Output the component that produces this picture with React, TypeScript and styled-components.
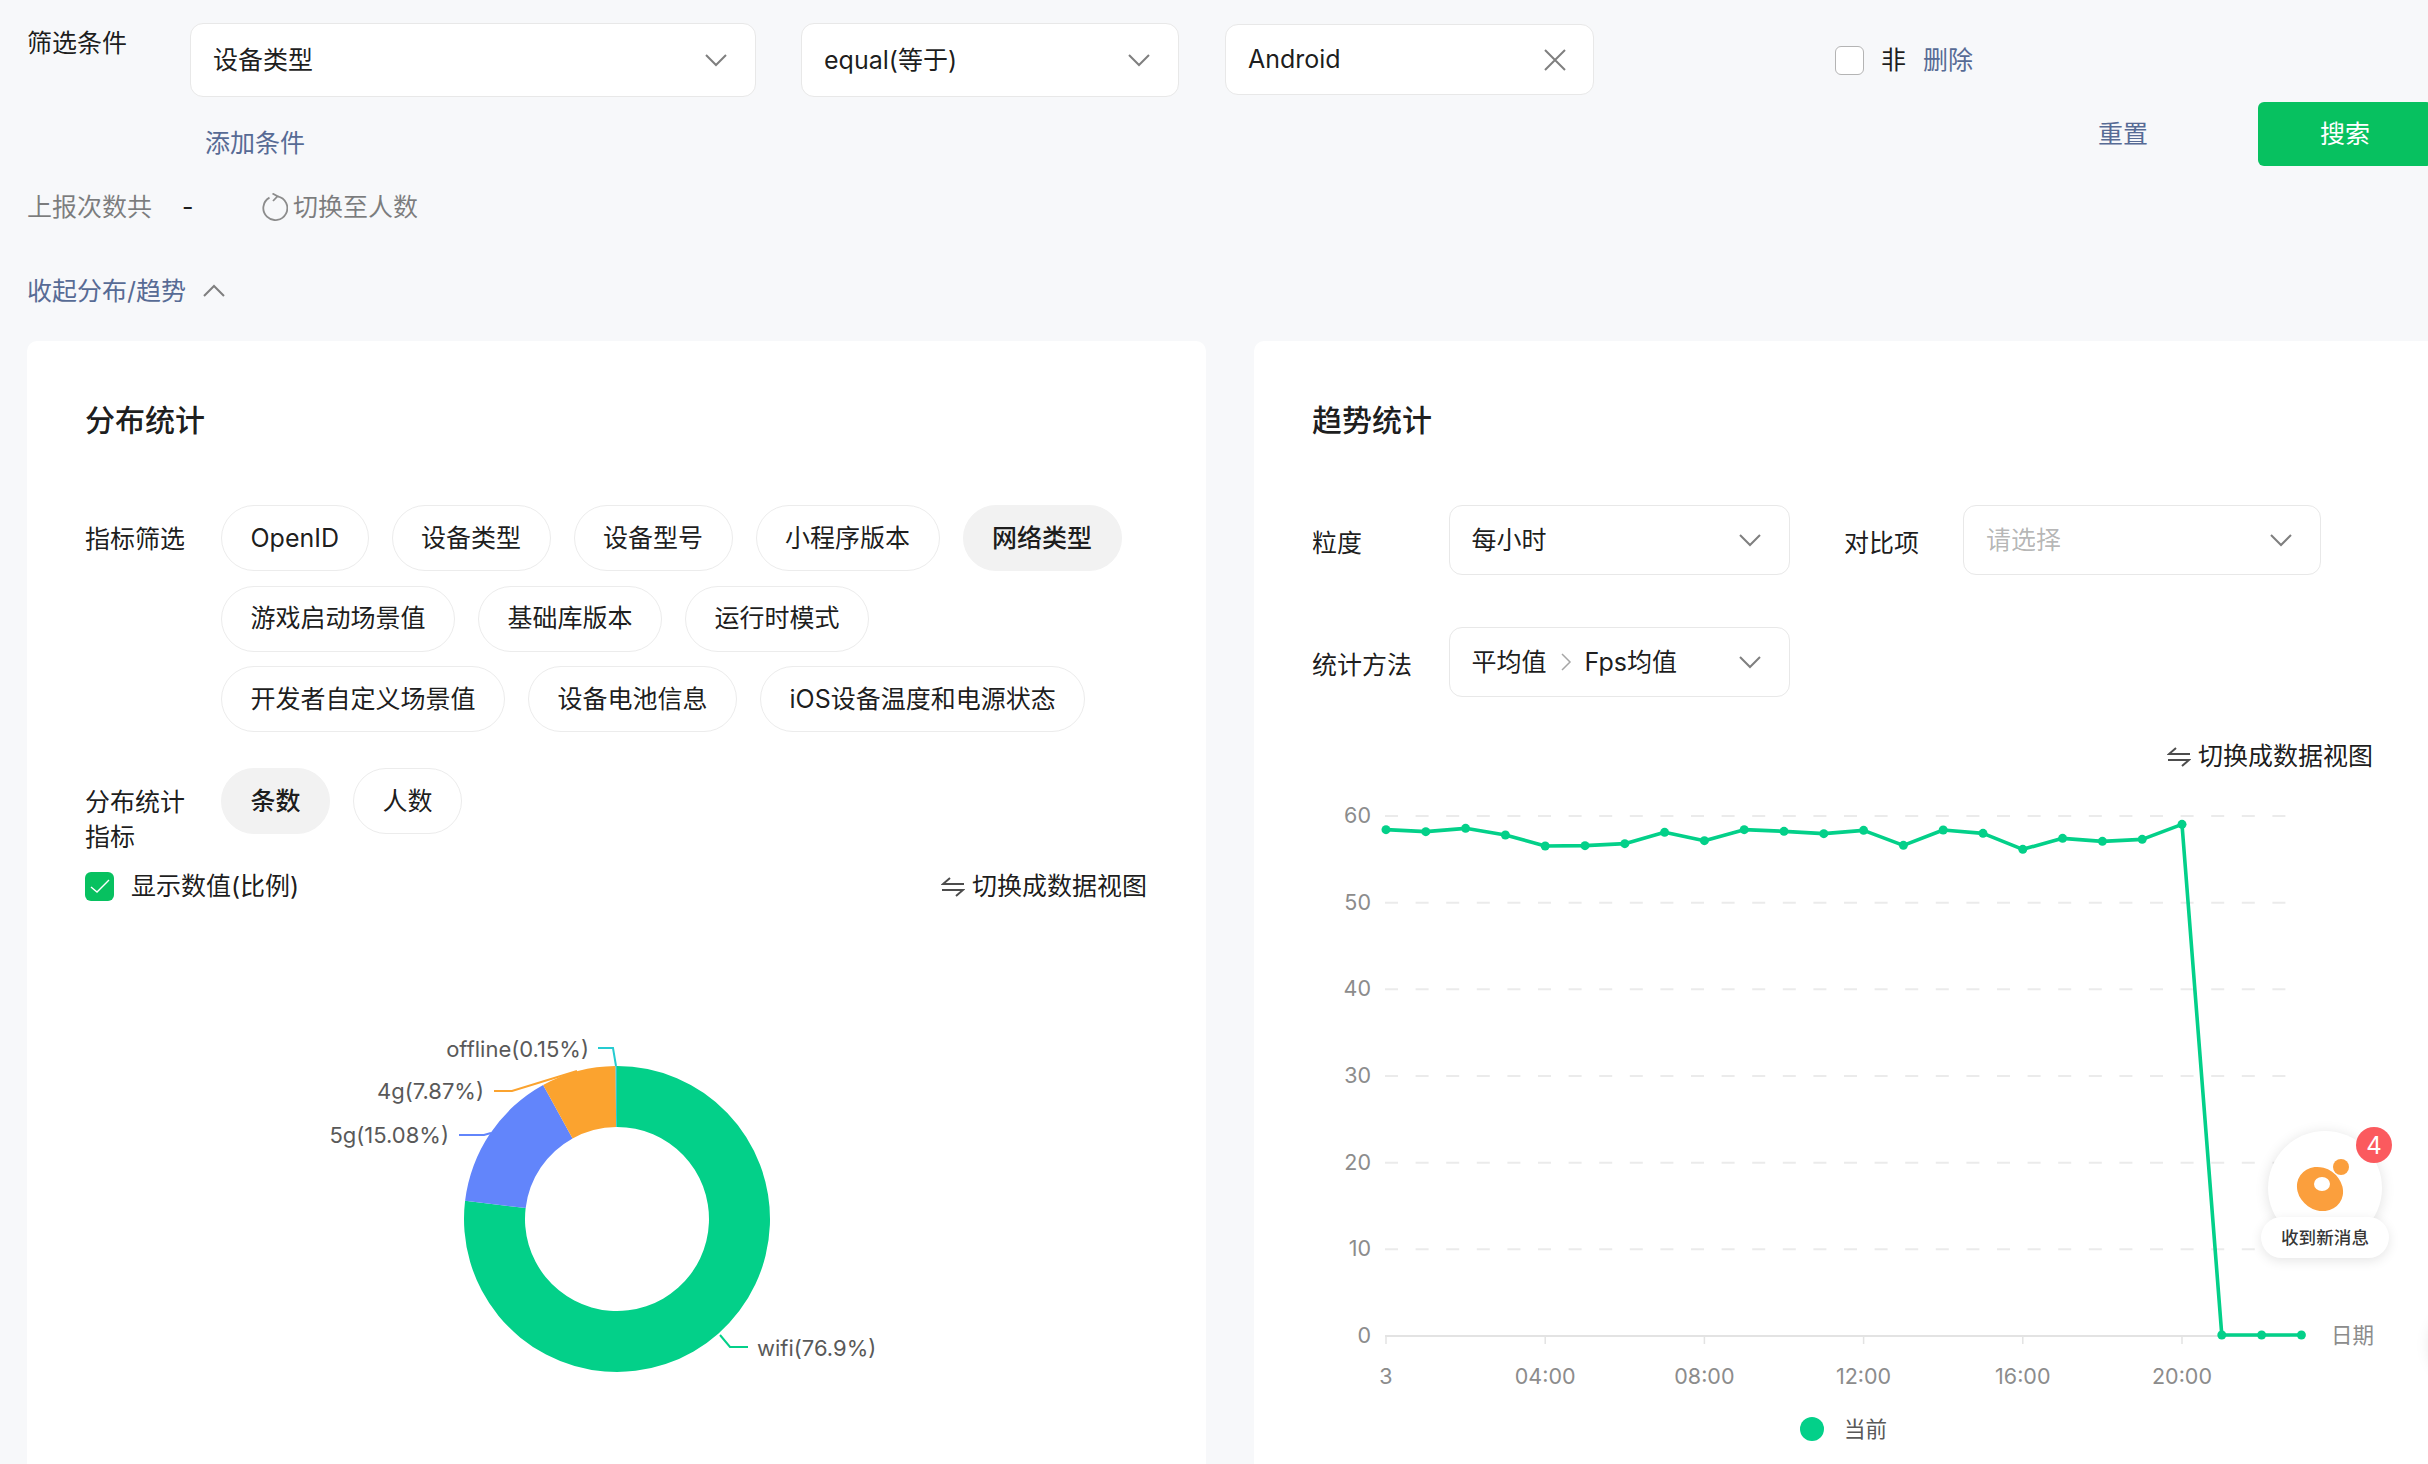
import React from 'react'
import styled, { createGlobalStyle } from 'styled-components'

const GlobalStyle = createGlobalStyle`
  html, body {
    margin: 0;
    padding: 0;
    background: #f7f8fa;
  }
  * {
    box-sizing: border-box;
  }
`

const Page = styled.div`
  position: relative;
  width: 2428px;
  height: 1464px;
  overflow: hidden;
  background: #f7f8fa;
  padding: 23px 0 0 27px;
  font-family: Inter, 'Noto Sans CJK SC', sans-serif;
  font-size: 25px;
  line-height: 35px;
  color: rgba(0, 0, 0, 0.9);
`

const FilterRow = styled.div`
  display: flex;
  align-items: flex-start;
`

const FilterLabel = styled.div`
  width: 163px;
  flex: none;
  line-height: 40px;
`

const Select = styled.div<{ $w: number; $h: number; $gap?: number }>`
  flex: none;
  display: flex;
  align-items: center;
  justify-content: space-between;
  width: ${p => p.$w}px;
  height: ${p => p.$h}px;
  margin-right: ${p => p.$gap || 0}px;
  padding: 0 27px 0 22px;
  background: #fff;
  border: 1.5px solid #e8e8e8;
  border-radius: 13px;
`

const ClearBox = styled(Select)`
  margin-top: 1px;
  padding-right: 26px;
`

const Placeholder = styled.span`
  color: rgba(0, 0, 0, 0.3);
`

const ValuePath = styled.span`
  display: flex;
  align-items: center;
  gap: 13px;
`

const NotGroup = styled.div`
  display: flex;
  align-items: center;
  height: 74px;
  margin-left: 241px;
`

const Check = styled.span<{ $on?: boolean }>`
  display: flex;
  align-items: center;
  justify-content: center;
  width: 29px;
  height: 29px;
  border-radius: 6px;
  background: ${p => (p.$on ? '#07c160' : '#fff')};
  border: ${p => (p.$on ? 'none' : '1.5px solid #b4b4b4')};
`

const NotText = styled.span`
  margin: 0 17px;
`

const Link = styled.a`
  color: #576b95;
`

const ActionRow = styled.div`
  display: flex;
  align-items: flex-start;
  justify-content: space-between;
  width: 2405px;
  height: 64px;
  margin-top: 5px;
`

const AddLink = styled(Link)`
  margin: 24px 0 0 178px;
`

const Actions = styled.div`
  display: flex;
  align-items: center;
  gap: 110px;
  height: 64px;
`

const SearchButton = styled.div`
  display: flex;
  align-items: center;
  justify-content: center;
  width: 174px;
  height: 64px;
  background: #07c160;
  border-radius: 6px;
  color: #fff;
`

const CountRow = styled.div`
  display: flex;
  align-items: center;
  height: 40px;
  margin-top: 21px;
  color: rgba(0, 0, 0, 0.5);
`

const Dash = styled.span`
  width: 80px;
  margin-left: 30px;
  color: rgba(0, 0, 0, 0.9);
`

const SwitchText = styled.span`
  display: flex;
  align-items: center;
  gap: 5px;
`

const CollapseRow = styled.div`
  display: flex;
  align-items: center;
  gap: 16px;
  height: 40px;
  margin-top: 44px;
  color: #576b95;
`

const Panels = styled.div`
  display: flex;
  gap: 48px;
  margin-top: 30px;
`

const Card = styled.section<{ $w: number }>`
  flex: none;
  width: ${p => p.$w}px;
  height: 1200px;
  padding: 59px 0 0 58px;
  background: #fff;
  border-radius: 10px;
`

const CardTitle = styled.h2`
  margin: 0 0 65px;
  font-size: 30px;
  line-height: 40px;
  font-weight: 500;
`

const MetricRow = styled.div`
  display: flex;
  align-items: flex-start;
  margin-bottom: 36px;
`

const MetricLabel = styled.div`
  width: 136px;
  flex: none;
  padding: 17px 16px 0 0;
`

const PillWrap = styled.div`
  display: flex;
  flex-wrap: wrap;
  gap: 14.5px 23px;
  width: 925px;
`

const Pill = styled.div<{ $active?: boolean }>`
  display: flex;
  align-items: center;
  height: 66px;
  padding: 0 28.5px;
  border-radius: 33px;
  border: 1.5px solid ${p => (p.$active ? '#f2f2f2' : '#ececec')};
  background: ${p => (p.$active ? '#f2f2f2' : '#fff')};
  font-weight: ${p => (p.$active ? 500 : 400)};
`

const OptionRow = styled.div`
  display: flex;
  align-items: center;
  justify-content: space-between;
  width: 1062px;
  height: 35px;
  margin-top: -22px;
`

const CheckLabel = styled.label`
  display: flex;
  align-items: center;
  gap: 17px;
`

const ViewToggle = styled.span`
  display: flex;
  align-items: center;
  gap: 7px;
`

const ChartSvg = styled.svg`
  display: block;
  overflow: visible;
`

const DonutSvg = styled(ChartSvg)`
  margin-top: 35px;
`

const FormRow = styled.div`
  display: flex;
  align-items: flex-start;
  margin-bottom: 52px;
`

const FormLabel = styled.div<{ $w: number }>`
  flex: none;
  width: ${p => p.$w}px;
  padding-top: 21px;
`

const ToggleRow = styled.div`
  display: flex;
  justify-content: flex-end;
  width: 1061px;
  margin-top: -10px;
`

const TrendSvg = styled(ChartSvg)`
  margin-top: 15px;
`

const SliceLabel = styled.text`
  font-size: 22px;
  fill: #595959;
  dominant-baseline: central;
`

const AxisText = styled.text`
  font-size: 21.5px;
  fill: #8c8c8c;
  dominant-baseline: central;
`

const LegendText = styled.text`
  font-size: 21.5px;
  fill: #595959;
  dominant-baseline: central;
`

const Float = styled.div`
  position: absolute;
  left: 2261px;
  top: 1127px;
  width: 128px;
  height: 131px;
`

const FloatCircle = styled.div`
  position: absolute;
  left: 7px;
  top: 4px;
  width: 114px;
  height: 114px;
  display: flex;
  align-items: center;
  justify-content: center;
  border-radius: 50%;
  background: #fff;
  box-shadow: 0 2px 14px rgba(0, 0, 0, 0.12);
`

const FloatPill = styled.div`
  position: absolute;
  left: 0;
  bottom: 0;
  width: 128px;
  height: 41px;
  display: flex;
  align-items: center;
  justify-content: center;
  border-radius: 21px;
  background: #fff;
  box-shadow: 0 3px 12px rgba(0, 0, 0, 0.1);
  font-size: 17.6px;
  font-weight: 500;
  color: rgba(0, 0, 0, 0.8);
`

const Badge = styled.div`
  position: absolute;
  left: 95px;
  top: 0;
  width: 36px;
  height: 36px;
  display: flex;
  align-items: center;
  justify-content: center;
  border-radius: 50%;
  background: #fb5a5e;
  color: #fff;
  font-size: 24px;
`

const EdgeShadow = styled.div`
  position: absolute;
  left: 2430px;
  top: 1310px;
  width: 70px;
  height: 70px;
  border-radius: 50%;
  background: #fff;
  box-shadow: 0 0 16px rgba(0, 0, 0, 0.1);
`

const Chevron = ({ up }: { up?: boolean }) => (
  <svg width="24" height="14" viewBox="0 0 24 14" fill="none" stroke="#7f7f7f" strokeWidth="2">
    <polyline points={up ? '2,12 12,2 22,12' : '2,2 12,12 22,2'} />
  </svg>
)

const SmallChevron = () => (
  <svg width="12" height="18" viewBox="0 0 12 18" fill="none" stroke="#a6a6a6" strokeWidth="1.5">
    <polyline points="2,1 10,9 2,17" />
  </svg>
)

const Cross = () => (
  <svg width="24" height="24" viewBox="0 0 24 24" fill="none" stroke="#7f7f7f" strokeWidth="2">
    <path d="M2 2 L22 22 M22 2 L2 22" />
  </svg>
)

const SwapIcon = () => (
  <svg width="24" height="20" viewBox="0 0 24 20" fill="none" stroke="#4d4d4d" strokeWidth="2">
    <path d="M23 7 H2 L9 1 M1 13 H22 L15 19" />
  </svg>
)

const RefreshIcon = () => (
  <svg width="26" height="28" viewBox="0 0 26 28" fill="none" stroke="#8c8c8c" strokeWidth="1.8">
    <path d="M15.5 3.3 A12 12 0 1 1 7.5 4.6" />
    <path d="M10.5 0.5 L15.5 3.3 L11 8" />
  </svg>
)

const Tick = () => (
  <svg width="20" height="16" viewBox="0 0 20 16" fill="none" stroke="#fff" strokeWidth="1.4">
    <polyline points="1,8 7,13 19,1" />
  </svg>
)

const metricPills = [
  'OpenID',
  '设备类型',
  '设备型号',
  '小程序版本',
  '网络类型',
  '游戏启动场景值',
  '基础库版本',
  '运行时模式',
  '开发者自定义场景值',
  '设备电池信息',
  'iOS设备温度和电源状态',
]

const slices = [
  { value: 76.9, color: '#03d089' },
  { value: 15.08, color: '#6285fb' },
  { value: 7.87, color: '#fba32f' },
  { value: 0.15, color: '#25cbd1' },
]

const CX = 617
const CY = 1220
const OUTER = 153
const INNER = 92

const polar = (r: number, pct: number) => {
  const a = (pct / 100) * Math.PI * 2
  return `${(CX + r * Math.sin(a)).toFixed(2)} ${(CY - r * Math.cos(a)).toFixed(2)}`
}

const slicePath = (from: number, to: number) => {
  const large = to - from > 50 ? 1 : 0
  return [
    `M${polar(OUTER, from)}`,
    `A${OUTER} ${OUTER} 0 ${large} 1 ${polar(OUTER, to)}`,
    `L${polar(INNER, to)}`,
    `A${INNER} ${INNER} 0 ${large} 0 ${polar(INNER, from)}`,
    'Z',
  ].join(' ')
}

const Donut = () => {
  let acc = 0
  return (
    <DonutSvg width="1062" height="500" viewBox="85 940 1062 500">
      {slices.map(s => {
        const d = slicePath(acc, acc + s.value)
        acc += s.value
        return <path key={s.color} d={d} fill={s.color} />
      })}
      <g fill="none" strokeWidth="2">
        <polyline points="598,1049 613,1049 616,1067" stroke="#25cbd1" />
        <polyline points="494,1092 512,1092 577,1072" stroke="#fba32f" />
        <polyline points="459,1136 484,1136 491,1134" stroke="#6285fb" />
        <polyline points="720,1336 730,1348 748,1348" stroke="#03d089" />
      </g>
      <SliceLabel x="589" y="1050" textAnchor="end">offline(0.15%)</SliceLabel>
      <SliceLabel x="484" y="1092" textAnchor="end">4g(7.87%)</SliceLabel>
      <SliceLabel x="449" y="1136" textAnchor="end">5g(15.08%)</SliceLabel>
      <SliceLabel x="757" y="1349">wifi(76.9%)</SliceLabel>
    </DonutSvg>
  )
}

const GRID_LEFT = 1384
const GRID_RIGHT = 2289
const X0 = 1385
const XSTEP = 39.8
const yLabels = [60, 50, 40, 30, 20, 10]
const xLabels = ['3', '04:00', '08:00', '12:00', '16:00', '20:00']
const trendRaw = [152, 158, 148, 168, 201, 200, 194, 160, 185, 152, 157, 164, 154, 199, 153, 163, 211, 178, 187, 181, 136]
const trendY = [...trendRaw.map(v => 780 + v / 3), 1336, 1336, 1336]
const yOf = (tick: number) => 1337 - (tick / 10) * 86.67

const Trend = () => (
  <TrendSvg width="1117" height="674" viewBox="1311 790 1117 674">
    {yLabels.map(t => (
      <line key={t} x1={GRID_LEFT} x2={GRID_RIGHT} y1={yOf(t)} y2={yOf(t)} stroke="#ebebeb" strokeWidth="2" strokeDasharray="13 17.6" />
    ))}
    {[...yLabels, 0].map(t => (
      <AxisText key={t} x="1370" y={yOf(t) - 1} textAnchor="end">{t}</AxisText>
    ))}
    <line x1={GRID_LEFT} x2={GRID_RIGHT} y1="1337" y2="1337" stroke="#e3e3e3" strokeWidth="2" />
    {xLabels.map((label, i) => {
      const x = X0 + i * 159.2
      return (
        <g key={label}>
          <line x1={x} x2={x} y1="1337" y2="1345" stroke="#e3e3e3" strokeWidth="1.5" />
          <AxisText x={x} y="1377" textAnchor="middle">{label}</AxisText>
        </g>
      )
    })}
    <AxisText x="2330" y="1336">日期</AxisText>
    <polyline
      points={trendY.map((y, i) => `${X0 + i * XSTEP},${y}`).join(' ')}
      fill="none"
      stroke="#03d089"
      strokeWidth="3.6"
      strokeLinejoin="round"
    />
    {trendY.map((y, i) => (
      <circle key={i} cx={X0 + i * XSTEP} cy={y} r="4.5" fill="#03d089" />
    ))}
    <circle cx="1811" cy="1430" r="12" fill="#03d089" />
    <LegendText x="1843" y="1430">当前</LegendText>
  </TrendSvg>
)

const App: React.FC = () => {
  return (
    <Page>
      <GlobalStyle />
      <FilterRow>
        <FilterLabel>筛选条件</FilterLabel>
        <Select $w={566} $h={74} $gap={45}>
          设备类型
          <Chevron />
        </Select>
        <Select $w={378} $h={74} $gap={46}>
          equal(等于)
          <Chevron />
        </Select>
        <ClearBox $w={369} $h={71}>
          Android
          <Cross />
        </ClearBox>
        <NotGroup>
          <Check />
          <NotText>非</NotText>
          <Link>删除</Link>
        </NotGroup>
      </FilterRow>
      <ActionRow>
        <AddLink>添加条件</AddLink>
        <Actions>
          <Link>重置</Link>
          <SearchButton>搜索</SearchButton>
        </Actions>
      </ActionRow>
      <CountRow>
        上报次数共
        <Dash>-</Dash>
        <SwitchText>
          <RefreshIcon />
          切换至人数
        </SwitchText>
      </CountRow>
      <CollapseRow>
        收起分布/趋势
        <Chevron up />
      </CollapseRow>
      <Panels>
        <Card $w={1179}>
          <CardTitle>分布统计</CardTitle>
          <MetricRow>
            <MetricLabel>指标筛选</MetricLabel>
            <PillWrap>
              {metricPills.map(name => (
                <Pill key={name} $active={name === '网络类型'}>{name}</Pill>
              ))}
            </PillWrap>
          </MetricRow>
          <MetricRow>
            <MetricLabel>分布统计指标</MetricLabel>
            <PillWrap>
              <Pill $active>条数</Pill>
              <Pill>人数</Pill>
            </PillWrap>
          </MetricRow>
          <OptionRow>
            <CheckLabel>
              <Check $on>
                <Tick />
              </Check>
              显示数值(比例)
            </CheckLabel>
            <ViewToggle>
              <SwapIcon />
              切换成数据视图
            </ViewToggle>
          </OptionRow>
          <Donut />
        </Card>
        <Card $w={1230}>
          <CardTitle>趋势统计</CardTitle>
          <FormRow>
            <FormLabel $w={136.5}>粒度</FormLabel>
            <Select $w={341} $h={70} $gap={54.5}>
              每小时
              <Chevron />
            </Select>
            <FormLabel $w={119}>对比项</FormLabel>
            <Select $w={358} $h={70}>
              <Placeholder>请选择</Placeholder>
              <Chevron />
            </Select>
          </FormRow>
          <FormRow>
            <FormLabel $w={136.5}>统计方法</FormLabel>
            <Select $w={341} $h={70}>
              <ValuePath>
                平均值
                <SmallChevron />
                Fps均值
              </ValuePath>
              <Chevron />
            </Select>
          </FormRow>
          <ToggleRow>
            <ViewToggle>
              <SwapIcon />
              切换成数据视图
            </ViewToggle>
          </ToggleRow>
          <Trend />
        </Card>
      </Panels>
      <Float>
        <FloatCircle>
          <svg width="64" height="64" viewBox="0 0 64 64">
            <ellipse cx="27" cy="33" rx="24" ry="21" fill="#fb9f3d" transform="rotate(35 27 33)" />
            <ellipse cx="29" cy="28" rx="8" ry="7" fill="#fff" />
            <circle cx="48" cy="11" r="8" fill="#fb9f3d" />
          </svg>
        </FloatCircle>
        <FloatPill>收到新消息</FloatPill>
        <Badge>4</Badge>
      </Float>
      <EdgeShadow />
    </Page>
  )
}

export default App
